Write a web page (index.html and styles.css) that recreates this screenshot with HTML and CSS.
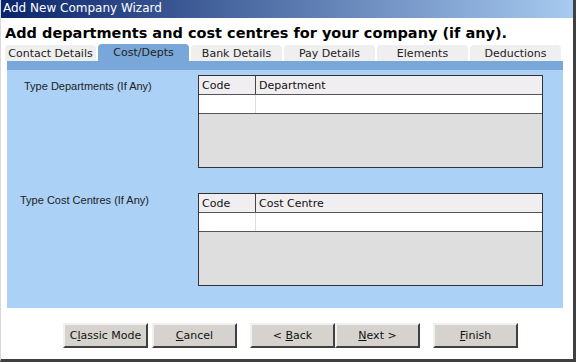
FILE: index.html
```html
<!DOCTYPE html>
<html>
<head>
  <meta charset="utf-8">
  <title>Add New Company Wizard</title>
  <link rel="stylesheet" href="styles.css">
</head>
<body>
  <div class="window">
    <div class="titlebar">Add New Company Wizard</div>

    <h1 class="heading">Add departments and cost centres for your company (if any).</h1>

    <ul class="tabs">
      <li class="tab">Contact Details</li>
      <li class="tab selected">Cost/Depts</li>
      <li class="tab">Bank Details</li>
      <li class="tab">Pay Details</li>
      <li class="tab">Elements</li>
      <li class="tab">Deductions</li>
    </ul>

    <div class="panel">
      <div class="panel-band"></div>

      <div class="section">
        <div class="section-label">Type Departments (If Any)</div>
        <div class="grid">
          <div class="grid-row grid-head">
            <div class="cell code">Code</div>
            <div class="cell name">Department</div>
          </div>
          <div class="grid-row grid-new">
            <div class="cell code"></div>
            <div class="cell name"></div>
          </div>
          <div class="grid-empty"></div>
        </div>
      </div>

      <div class="section second">
        <div class="section-label">Type Cost Centres (If Any)</div>
        <div class="grid">
          <div class="grid-row grid-head">
            <div class="cell code">Code</div>
            <div class="cell name">Cost Centre</div>
          </div>
          <div class="grid-row grid-new">
            <div class="cell code"></div>
            <div class="cell name"></div>
          </div>
          <div class="grid-empty"></div>
        </div>
      </div>
    </div>

    <div class="buttons">
      <button class="btn">C<u>l</u>assic Mode</button>
      <button class="btn"><u>C</u>ancel</button>
      <button class="btn spaced">&lt; <u>B</u>ack</button>
      <button class="btn joined"><u>N</u>ext &gt;</button>
      <button class="btn spaced"><u>F</u>inish</button>
    </div>
  </div>
</body>
</html>
```

FILE: styles.css
```css
body {
  margin: 0;
  font-family: "DejaVu Sans", Verdana, sans-serif;
  font-size: 11px;
  color: #000;
}

.window {
  width: 576px;
  height: 362px;
  box-sizing: border-box;
  background: #fff;
  border-left: 1px solid #d8d8d8;
  border-right: 3px solid #404040;
  border-bottom: 3px solid #404040;
}

.titlebar {
  height: 18px;
  line-height: 17px;
  padding-left: 2px;
  color: #fff;
  font-size: 12px;
  background: linear-gradient(to right, #0a246a, #a6caf0);
}

.heading {
  margin: 5px 0 0 4px;
  font-size: 14.5px;
  font-weight: bold;
  line-height: 20px;
}

.tabs {
  list-style: none;
  margin: 1px 0 0 4px;
  padding: 0;
  display: flex;
  gap: 2px;
  align-items: flex-end;
  height: 17px;
}

.tab {
  width: 91px;
  height: 16px;
  line-height: 17px;
  text-align: center;
  background: #efefef;
  border-radius: 4px 4px 0 0;
  color: #222;
}

.tab.selected {
  height: 17px;
  background: #7aa7da;
}

.panel {
  width: 556px;
  height: 247px;
  margin-left: 6px;
  background: #abd1f6;
}

.panel-band {
  height: 9px;
  background: #7aa7da;
}

.section {
  display: flex;
  padding: 5px 0 0 17px;
}

.section.second {
  padding: 25px 0 0 13px;
}

.section-label {
  width: 174px;
  padding-top: 5px;
  font-family: "Liberation Sans", Arial, sans-serif;
  font-size: 11px;
  color: #222;
}

.section.second .section-label {
  width: 178px;
  padding-top: 1px;
}

.grid {
  width: 343px;
  height: 91px;
  border: 1px solid #333;
  display: flex;
  flex-direction: column;
  background: #dedede;
}

.grid-row {
  display: flex;
  height: 18px;
  border-bottom: 1px solid #555;
}

.grid-head {
  background: #f1eef1;
}

.grid-new {
  background: #fff;
}

.cell {
  line-height: 19px;
  padding-left: 3px;
  color: #111;
}

.cell.code {
  width: 53px;
  border-right: 1px solid #444;
}

.grid-new .cell.code {
  border-right-color: #ddd;
}

.grid-empty {
  flex: 1;
}

.buttons {
  display: flex;
  margin: 15px 0 0 62px;
  gap: 4px;
}

.btn {
  width: 85px;
  height: 25px;
  font-family: "DejaVu Sans", Verdana, sans-serif;
  font-size: 11px;
  color: #111;
  background: #d6d3ce;
  border: 2px solid;
  border-color: #f0f0f0 #404040 #404040 #f0f0f0;
  padding: 0;
}

.btn.spaced {
  margin-left: 9px;
}

.btn.joined {
  margin-left: -4px;
}
```
